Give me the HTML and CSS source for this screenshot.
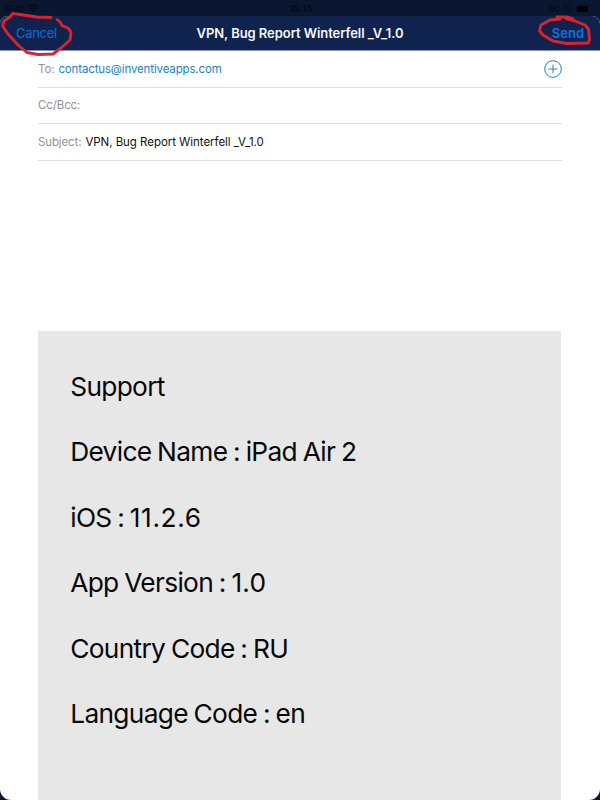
FILE: index.html
```
<!DOCTYPE html>
<html lang="en">
<head>
<meta charset="utf-8">
<title>VPN, Bug Report</title>
<link rel="stylesheet" href="styles.css">
</head>
<body>
<div class="screen">
  <header class="status">
    <div class="device"><span>iPad</span>
      <svg width="12" height="9" viewBox="0 0 12 9" fill="none" stroke="currentColor" stroke-width="1.7"><path d="M.8 3.1Q6-1.3 11.2 3.1M2.8 5.3Q6 2.5 9.2 5.3"/><path d="M4.2 6.7Q6 5.2 7.8 6.7L6 8.7Z" fill="currentColor" stroke="none"/></svg>
    </div>
    <span class="time">15:15</span>
    <div class="power"><span>66 %</span>
      <svg width="18" height="8" viewBox="0 0 18 8"><rect x=".4" y=".4" width="15.2" height="7.2" rx="1.8" fill="none" stroke="#061126" stroke-width=".6"/><rect x="1" y="1" width="11" height="6" rx="1" fill="#000107"/><path d="M16.5 2.6v2.8q1.2-1.4 0-2.8" fill="#061126"/></svg>
    </div>
  </header>
  <main class="sheet">
    <nav class="nav">
      <span class="cancel">Cancel</span>
      <h1 class="title">VPN, Bug Report Winterfell _V_1.0</h1>
      <span class="send">Send</span>
    </nav>
    <section class="fields">
      <div class="field"><span class="label">To:</span><span class="address">contactus@inventiveapps.com</span>
        <svg class="add" width="18" height="18" viewBox="0 0 18 18" fill="none" stroke="#287fc5" stroke-width="1"><circle cx="9" cy="9" r="8.3"/><path d="M4.6 9h8.8M9 4.6v8.8"/></svg>
      </div>
      <div class="field"><span class="label">Cc/Bcc:</span></div>
      <div class="field"><span class="label">Subject:</span><span class="subject">VPN, Bug Report Winterfell _V_1.0</span></div>
    </section>
    <section class="message">
      <p>Support</p>
      <p>Device Name : iPad Air 2</p>
      <p class="system">iOS : <span class="number">11.2.6</span></p>
      <p>App Version : <span class="version">1.0</span></p>
      <p>Country Code : RU</p>
      <p>Language Code : en</p>
    </section>
  </main>
  <svg class="marks" width="600" height="60" viewBox="0 0 600 60" fill="none" stroke="#d9232e" stroke-width="2.9" stroke-linecap="round" stroke-linejoin="round">
    <path d="M51 17.5 37 17 13 13.5 10 17 4 21 2.5 26 8 34 18 45 27 52.5 38 54.5 53 54 61 48 70 40 71 32 68 28 62 25.5 60 22 57 19.5"/>
    <path d="M573 19 567 17 557 17 560 19 550 20 541 25 539.5 31 543 35 553 41 567 43.5 588 43 589.5 40 588.5 29 585 25 575 21 566 18.5"/>
  </svg>
</div>
</body>
</html>
```
FILE: styles.css
```
* { box-sizing: border-box; }
body { margin: 0; font-family: Inter, "Liberation Sans", sans-serif; }
.screen { position: relative; width: 600px; height: 800px; overflow: hidden; background: #0b1731; display: flex; flex-direction: column; }
.status { height: 16px; flex: none; display: grid; grid-template-columns: 1fr auto 1fr; align-items: center; padding: 1px 0 0 5px; color: #020714; font-size: 9.5px; }
.device, .power { display: flex; align-items: center; gap: 4px; }
.device { letter-spacing: -.3px; }
.power { justify-content: flex-end; padding-right: 6px; }
.time { font-weight: 600; transform: translateX(-1.5px); }
.sheet { flex: 1; min-height: 0; border-radius: 8px 8px 11px 11px; overflow: hidden; background: #fff; display: flex; flex-direction: column; }
.nav { height: 35px; flex: none; display: grid; grid-template-columns: 1fr auto 1fr; align-items: center; padding: 0 16px; background: #10234f; border-bottom: 1px solid #8790aa; font-size: 13px; }
.cancel { color: #1269d9; letter-spacing: -.3px; }
.title { margin: 0; color: #f4f6fb; font-size: 13px; font-weight: 600; letter-spacing: -.06px; white-space: nowrap; }
.send { color: #1472e3; font-weight: 600; text-align: right; }
.fields { margin: 0 38px; flex: none; }
.field { height: 36.6px; display: flex; align-items: center; border-bottom: 1px solid #dedee0; font-size: 11.5px; letter-spacing: -.12px; white-space: nowrap; }
.label { color: #929296; margin-right: 4px; }
.address { color: #197fd2; letter-spacing: -.14px; }
.subject { color: #111; letter-spacing: -.05px; }
.add { margin-left: auto; }
.message { flex: 1; margin: 170.2px 39px 0 37.6px; padding: 23px 32.6px 0; background: #e7e7e7; color: #080808; font-size: 26.3px; letter-spacing: -.68px; word-spacing: -1px; }
.message p { margin: 0; height: 65.5px; line-height: 65.5px; white-space: nowrap; }
.number { letter-spacing: .6px; }
.version { letter-spacing: .3px; }
.marks { position: absolute; left: 0; top: 0; }
```
